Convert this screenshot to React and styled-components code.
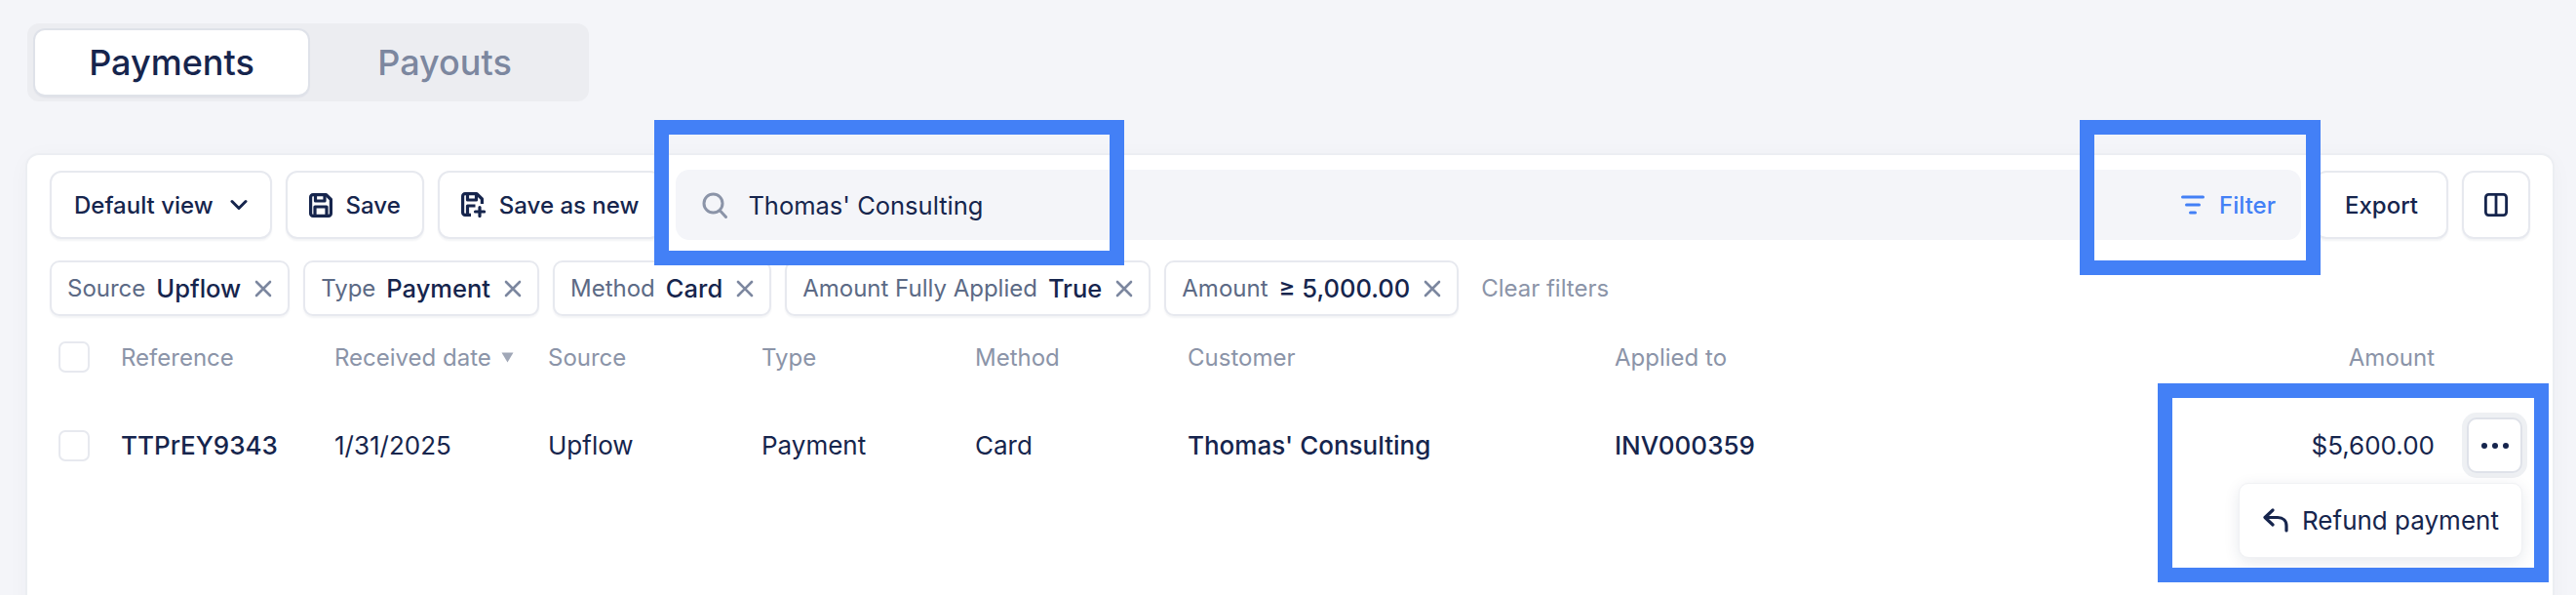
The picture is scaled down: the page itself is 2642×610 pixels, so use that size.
import React from "react";
import styled, { createGlobalStyle } from "styled-components";

const navy = "#16254d";
const slate = "#5c6a85";
const muted = "#8b94a8";
const line = "#e7e9ef";
const blue = "#4380f6";

const Global = createGlobalStyle`
  html, body { margin: 0; padding: 0; background: #f4f5f9; }
  body {
    width: 2642px;
    height: 610px;
    overflow: hidden;
    font-family: Inter, "Liberation Sans", sans-serif;
    color: ${navy};
  }
  * { box-sizing: border-box; }
`;

const Page = styled.div`
  position: relative;
  width: 2642px;
  height: 610px;
  padding: 24px 24px 0 28px;
  overflow: hidden;
`;

const Tabs = styled.div`
  display: flex;
  width: 576px;
  height: 80px;
  padding: 7px 8px;
  background: #ecedf1;
  border-radius: 12px;
`;

const Tab = styled.div`
  width: 281px;
  display: flex;
  align-items: center;
  justify-content: center;
  font-size: 36px;
  font-weight: 500;
  border-radius: 10px;
  color: ${p => (p.$active ? navy : "#7c879f")};
  background: ${p => (p.$active ? "#fff" : "transparent")};
  box-shadow: ${p => (p.$active ? "0 0 0 2px #dfe2e9, 0 2px 3px rgba(22,37,77,.14)" : "none")};
`;

const Card = styled.div`
  margin-top: 55px;
  height: 520px;
  padding: 16px 23px 0;
  background: #fff;
  border-radius: 12px;
  box-shadow: 0 0 0 2px #eceef2, 0 4px 24px rgba(22, 37, 77, 0.04);
`;

const Toolbar = styled.div`
  display: flex;
  align-items: center;
  gap: 14px;
  height: 70px;
`;

const Button = styled.div`
  flex: none;
  height: 70px;
  display: flex;
  align-items: center;
  gap: ${p => p.$gap || 14}px;
  padding: 0 ${p => p.$pad || 22}px;
  background: #fff;
  border: 2px solid ${line};
  border-radius: 12px;
  box-shadow: 0 2px 2px rgba(22, 37, 77, 0.05);
  font-size: 24px;
  font-weight: 500;
  white-space: nowrap;
`;

const Search = styled.div`
  flex: 1;
  height: 72px;
  padding: 0 26px 0 27px;
  display: flex;
  align-items: center;
  background: #f4f5f9;
  border-radius: 14px;
  font-size: 25.500px;
`;

const SearchText = styled.span`
  margin-left: 21px;
`;

const FilterLink = styled.div`
  margin-left: auto;
  display: flex;
  align-items: center;
  gap: 15px;
  color: ${blue};
  font-size: 24px;
  font-weight: 500;
`;

const Chips = styled.div`
  display: flex;
  align-items: center;
  gap: 14px;
  margin-top: 22px;
  height: 57px;
`;

const Chip = styled.div`
  height: 57px;
  display: flex;
  align-items: center;
  padding: 0 16px;
  background: #fff;
  border: 2px solid ${line};
  border-radius: 10px;
  box-shadow: 0 2px 2px rgba(22, 37, 77, 0.05);
  font-size: 24px;
  white-space: nowrap;
`;

const ChipLabel = styled.span`
  color: ${slate};
  margin-right: 11px;
`;

const ChipValue = styled.span`
  font-size: 25.500px;
  font-weight: 500;
  margin-right: 14px;
`;

const Clear = styled.div`
  margin-left: 9px;
  font-size: 24px;
  color: ${muted};
`;

const Row = styled.div`
  display: grid;
  grid-template-columns: 64px 219px 219px 219px 219px 218px 438px 1fr 150px 98px;
  align-items: center;
  margin-left: 9px;
  height: ${p => p.$h}px;
  margin-top: ${p => p.$mt || 0}px;
  font-size: ${p => (p.$head ? 24 : 26)}px;
  color: ${p => (p.$head ? muted : navy)};
  white-space: nowrap;
`;

const Check = styled.div`
  width: 32px;
  height: 32px;
  background: #fff;
  border: 2px solid ${line};
  border-radius: 7px;
`;

const Strong = styled.div`
  font-weight: 500;
`;

const Sorted = styled.div`
  display: flex;
  align-items: center;
  gap: 10px;
`;

const Right = styled.div`
  text-align: right;
  justify-self: end;
`;

const MoreCell = styled.div`
  position: relative;
  display: flex;
  justify-content: flex-end;
  padding-right: 8px;
`;

const More = styled.div`
  width: 57px;
  height: 57px;
  display: flex;
  align-items: center;
  justify-content: center;
  background: #fff;
  border: 2px solid #dfe2e9;
  border-radius: 10px;
  box-shadow: 0 0 0 5px #eef0f3;
`;

const Menu = styled.div`
  position: absolute;
  top: 67px;
  right: 8px;
  width: 291px;
  height: 77px;
  display: flex;
  align-items: center;
  gap: 14px;
  padding-left: 24px;
  background: #fff;
  border: 1px solid #f0f1f4;
  border-radius: 10px;
  box-shadow: 0 4px 16px rgba(22, 37, 77, 0.1);
  font-size: 26px;
  z-index: 2;
`;

const Frame = styled.div`
  position: absolute;
  left: ${p => p.$x}px;
  top: ${p => p.$y}px;
  width: ${p => p.$w}px;
  height: ${p => p.$h}px;
  border: 15px solid ${blue};
  z-index: 5;
`;

const Ico = styled.svg`
  flex: none;
  display: block;
`;

const SearchIcon = () => (
  <Ico width="26" height="27" viewBox="0 0 26 27" fill="none" stroke="#8b94a8" strokeWidth="3" strokeLinecap="round">
    <circle cx="11.500" cy="11.500" r="9.500" />
    <path d="M19 19.500l5.500 6" />
  </Ico>
);

const Chevron = () => (
  <Ico width="18" height="12" viewBox="0 0 18 12" fill="none" stroke={navy} strokeWidth="3" strokeLinecap="round" strokeLinejoin="round">
    <path d="M2 2.500l7 7 7-7" />
  </Ico>
);

const SaveIcon = () => (
  <Ico width="24" height="25" viewBox="0 0 24 25" fill="none" stroke={navy} strokeWidth="3.200" strokeLinejoin="round">
    <path d="M4 1.600h13.500L22.400 6.500V21a2.400 2.400 0 0 1-2.400 2.400H4A2.400 2.400 0 0 1 1.600 21V4A2.400 2.400 0 0 1 4 1.600z" />
    <path d="M6.500 1.600v6.400h9.500V1.600M6 23.400V14h12v9.400" />
  </Ico>
);

const SaveNewIcon = () => (
  <Ico width="25" height="26" viewBox="0 0 25 26" fill="none" stroke={navy} strokeWidth="3.200" strokeLinejoin="round">
    <path d="M10 23.400H4A2.400 2.400 0 0 1 1.600 21V4A2.400 2.400 0 0 1 4 1.600h12l5.400 5.400v5" />
    <path d="M6.500 1.600v6.400h9V1.600M6.500 23V14h8" />
    <path d="M19 15.500v9M14.500 20h9" strokeLinecap="round" />
  </Ico>
);

const Close = () => (
  <Ico width="18" height="18" viewBox="0 0 18 18" fill="none" stroke="#7c879f" strokeWidth="2.600" strokeLinecap="round">
    <path d="M2 2l14 14M16 2L2 16" />
  </Ico>
);

const FilterIcon = () => (
  <Ico width="24" height="20" viewBox="0 0 24 20" fill="none" stroke={blue} strokeWidth="3" strokeLinecap="round">
    <path d="M1.500 2h21M5.500 10h13M9.500 18h5" />
  </Ico>
);

const ColumnsIcon = () => (
  <Ico width="24" height="24" viewBox="0 0 24 24" fill="none" stroke={navy} strokeWidth="2.800" strokeLinejoin="round">
    <rect x="1.400" y="1.400" width="21.200" height="21.200" rx="3" />
    <path d="M12 1.400v21.200" />
  </Ico>
);

const Caret = () => (
  <Ico width="13" height="11" viewBox="0 0 13 11" fill="#a0a7b7">
    <path d="M0.500 0.500h12L6.500 10.500z" />
  </Ico>
);

const Dots = () => (
  <Ico width="28" height="6" viewBox="0 0 28 6" fill={navy}>
    <circle cx="3" cy="3" r="3" />
    <circle cx="14" cy="3" r="3" />
    <circle cx="25" cy="3" r="3" />
  </Ico>
);

const Reply = () => (
  <Ico width="26" height="25" viewBox="0 0 26 25" fill="none" stroke={navy} strokeWidth="3.200" strokeLinecap="round" strokeLinejoin="round">
    <path d="M10 2L2 9.500l8 7.500" />
    <path d="M2.500 9.500H15c5.500 0 9 3.500 9 8.500v5" />
  </Ico>
);

const filters = [
  ["Source", "Upflow"],
  ["Type", "Payment"],
  ["Method", "Card"],
  ["Amount Fully Applied", "True"],
  ["Amount", "≥ 5,000.00"],
];

export default function App() {
  return (
    <Page>
      <Global />
      <Tabs>
        <Tab $active>Payments</Tab>
        <Tab>Payouts</Tab>
      </Tabs>
      <Card>
        <Toolbar>
          <Button $gap={17} $pad={23}>
            Default view
            <Chevron />
          </Button>
          <Button>
            <SaveIcon />
            Save
          </Button>
          <Button>
            <SaveNewIcon />
            Save as new
          </Button>
          <Search>
            <SearchIcon />
            <SearchText>Thomas' Consulting</SearchText>
            <FilterLink>
              <FilterIcon />
              Filter
            </FilterLink>
          </Search>
          <Button $pad={29}>Export</Button>
          <Button $pad={21}>
            <ColumnsIcon />
          </Button>
        </Toolbar>
        <Chips>
          {filters.map(([label, value]) => (
            <Chip key={label}>
              <ChipLabel>{label}</ChipLabel>
              <ChipValue>{value}</ChipValue>
              <Close />
            </Chip>
          ))}
          <Clear>Clear filters</Clear>
        </Chips>
        <Row $head $h={32} $mt={26}>
          <Check />
          <div>Reference</div>
          <Sorted>
            Received date
            <Caret />
          </Sorted>
          <div>Source</div>
          <div>Type</div>
          <div>Method</div>
          <div>Customer</div>
          <div>Applied to</div>
          <Right>Amount</Right>
          <div />
        </Row>
        <Row $h={57} $mt={46}>
          <Check />
          <Strong>TTPrEY9343</Strong>
          <div>1/31/2025</div>
          <div>Upflow</div>
          <div>Payment</div>
          <div>Card</div>
          <Strong>Thomas' Consulting</Strong>
          <Strong>INV000359</Strong>
          <Right>$5,600.00</Right>
          <MoreCell>
            <More>
              <Dots />
            </More>
            <Menu>
              <Reply />
              Refund payment
            </Menu>
          </MoreCell>
        </Row>
      </Card>
      <Frame $x={671} $y={123} $w={482} $h={149} />
      <Frame $x={2133} $y={123} $w={247} $h={159} />
      <Frame $x={2213} $y={393} $w={401} $h={204} />
    </Page>
  );
}
